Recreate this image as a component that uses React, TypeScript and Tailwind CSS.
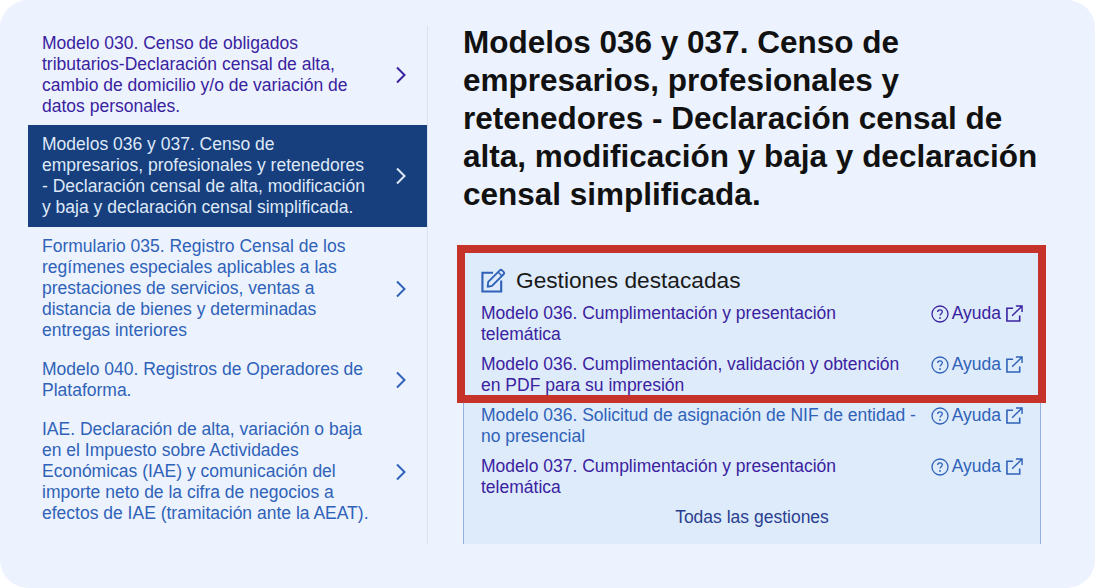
const menu = [
  {
    text: "Modelo 030. Censo de obligados tributarios-Declaración censal de alta, cambio de domicilio y/o de variación de datos personales.",
    visited: true,
  },
  {
    text: "Modelos 036 y 037. Censo de empresarios, profesionales y retenedores - Declaración censal de alta, modificación y baja y declaración censal simplificada.",
    active: true,
  },
  {
    text: "Formulario 035. Registro Censal de los regímenes especiales aplicables a las prestaciones de servicios, ventas a distancia de bienes y determinadas entregas interiores",
  },
  { text: "Modelo 040. Registros de Operadores de Plataforma." },
  {
    text: "IAE. Declaración de alta, variación o baja en el Impuesto sobre Actividades Económicas (IAE) y comunicación del importe neto de la cifra de negocios a efectos de IAE (tramitación ante la AEAT).",
  },
];

const gestiones = [
  { text: "Modelo 036. Cumplimentación y presentación telemática", visited: true, helpVisited: true },
  { text: "Modelo 036. Cumplimentación, validación y obtención en PDF para su impresión", visited: true },
  { text: "Modelo 036. Solicitud de asignación de NIF de entidad - no presencial" },
  { text: "Modelo 037. Cumplimentación y presentación telemática", visited: true },
];

function Chevron({ className }: { className: string }) {
  return (
    <svg viewBox="0 0 12 18" fill="none" className={className}>
      <path d="M2 1.500 9.500 9 2 16.500" stroke="currentColor" strokeWidth="2" />
    </svg>
  );
}

function EditIcon() {
  return (
    <svg viewBox="0 0 26 26" fill="none" className="h-[25px] w-[25px] shrink-0 text-[#2f62b8]">
      <path d="M12.500 5H1.500v19.500h19.500V13" stroke="currentColor" strokeWidth="2.200" />
      <path
        d="M7.500 14.500 19.500 2.500a1.700 1.700 0 0 1 2.400 0l1.600 1.600a1.700 1.700 0 0 1 0 2.400l-12 12-4.600 1z"
        stroke="currentColor"
        strokeWidth="1.900"
        strokeLinejoin="round"
      />
      <path d="m18 4.500 4 4" stroke="currentColor" strokeWidth="1.600" />
    </svg>
  );
}

function HelpIcon() {
  return (
    <svg viewBox="0 0 18 18" fill="none" className="h-[18px] w-[18px] shrink-0">
      <circle cx="9" cy="9" r="8" stroke="currentColor" strokeWidth="1.300" />
      <path
        d="M6.700 7c0-1.400 1-2.200 2.300-2.200s2.300.8 2.300 2c0 1.900-2.300 1.900-2.300 3.800"
        stroke="currentColor"
        strokeWidth="1.300"
      />
      <circle cx="9" cy="13" r=".9" fill="currentColor" />
    </svg>
  );
}

function ExternalIcon() {
  return (
    <svg viewBox="0 0 18 18" fill="none" className="h-[17px] w-[17px] shrink-0">
      <path d="M7.500 3.500H1v13.500h13.500v-6" stroke="currentColor" strokeWidth="1.700" />
      <path d="M6.500 11.500 16.500 1.500M10.500 1h6.500v6.500" stroke="currentColor" strokeWidth="1.500" />
    </svg>
  );
}

export default function App() {
  return (
    <div className="h-[588px] w-[1095px] overflow-hidden bg-white font-['Liberation_Sans',Arial,sans-serif]">
      <div className="flex h-full rounded-[28px] bg-[#ecf3fe] pl-[28px] pt-[26px] pb-[44px]">
        <div className="w-[400px] shrink-0 border-r border-[#d8e2f0]">
          {menu.map((item, i) => (
            <div
              key={i}
              className={
                "flex items-center pl-[14px] pr-[20px] text-[17.5px] leading-[21px] " +
                (i == 0 ? "pt-[7px] pb-[8px] " : "pt-[9px] pb-[9px] ") +
                (item.active
                  ? "bg-[#173f7e] text-[#dfe9f8]"
                  : item.visited
                    ? "text-[#3a22a0]"
                    : "text-[#2f62b8]")
              }
            >
              <span className="w-[330px]">{item.text}</span>
              <Chevron className="ml-auto h-[18px] w-[12px]" />
            </div>
          ))}
        </div>

        <div className="ml-[35px] flex w-[578px] flex-col">
          <h1 className="-mt-[3px] w-[578px] text-[31.5px] font-bold leading-[38px] text-[#111]">
            Modelos 036 y 037. Censo de empresarios, profesionales y retenedores - Declaración censal de alta,
            modificación y baja y declaración censal simplificada.
          </h1>
          <div className="relative mt-[32px] flex-1 border-x border-[#94b2e4] bg-[#deebfb] pl-[17px] pr-[17px] pt-[22px]">
            <div className="flex items-center gap-[10px] text-[22.7px] leading-[26px] text-[#1a1a1a]">
              <EditIcon />
              <span>Gestiones destacadas</span>
            </div>
            <div className="mt-[10px] flex flex-col gap-[9px]">
              {gestiones.map((row) => (
                <div
                  key={row.text}
                  className={
                    "flex justify-between text-[17.5px] leading-[21px] " +
                    (row.visited ? "text-[#3a22a0]" : "text-[#2f62b8]")
                  }
                >
                  <span className="w-[438px]">{row.text}</span>
                  <span
                    className={
                      "flex h-[21px] items-center " +
                      (row.helpVisited ? "text-[#3a22a0]" : "text-[#2f62b8]")
                    }
                  >
                    <HelpIcon />
                    <span className="ml-[3px] mr-[5px]">Ayuda</span>
                    <ExternalIcon />
                  </span>
                </div>
              ))}
            </div>
            <div className="mt-[9px] text-center text-[17.5px] leading-[21px] text-[#2a3f8f]">Todas las gestiones</div>
            <div className="absolute -left-[7px] -right-[6px] top-0 h-[158px] border-[8px] border-[#c5332a]" />
          </div>
        </div>
      </div>
    </div>
  );
}
